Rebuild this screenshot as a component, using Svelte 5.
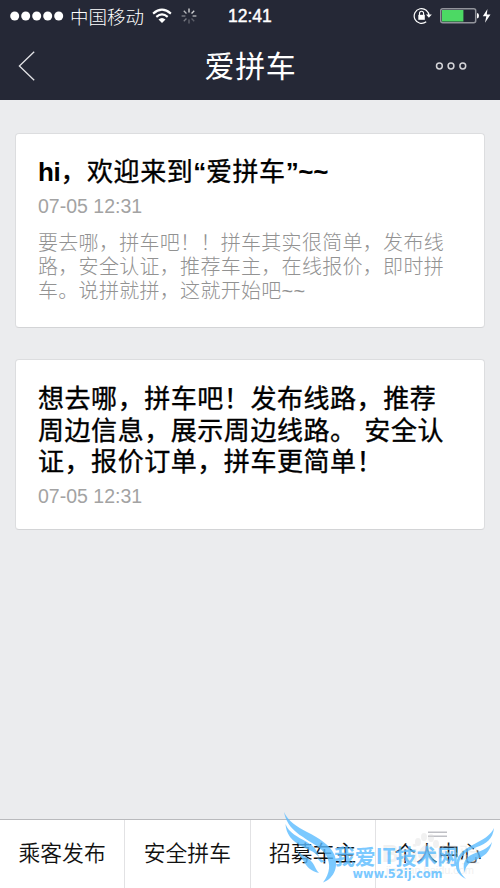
<script>
  const cards = [
    {
      title: ['hi，欢迎来到“爱拼车”~~'],
      date: '07-05 12:31',
      body: ['要去哪，拼车吧！！拼车其实很简单，发布线', '路，安全认证，推荐车主，在线报价，即时拼', '车。说拼就拼，这就开始吧~~']
    },
    {
      title: ['想去哪，拼车吧！发布线路，推荐', '周边信息，展示周边线路。 安全认', '证，报价订单，拼车更简单！'],
      date: '07-05 12:31',
      body: []
    }
  ];
  const tabs = ['乘客发布', '安全拼车', '招募车主', '个人中心'];
  const spokes = [1, 0.95, 0.8, 0.3, 0.35, 0.45, 0.5, 0.8];

  // Odd pieces are Latin letters, quotes and tildes, set in the bold Latin face.
  const pieces = (line) => line.split(/([a-z“”~]+)/);
</script>

<div class="screen">
  <header>
    <div class="status">
      <svg class="signal" width="54" height="10" viewBox="0 0 54 10">
        {#each [0, 1, 2, 3, 4] as i}
          <circle cx={4.7 + i * 11} cy="5" r="4.5" fill="#fff" />
        {/each}
      </svg>
      <span class="carrier">中国移动</span>
      <svg class="wifi" width="20" height="16" viewBox="0 0 20 16" fill="none" stroke="#fff" stroke-width="2.1">
        <path d="M1.1 5.6Q10 -2.2 18.9 5.6" />
        <path d="M4.3 8.9Q10 3.8 15.7 8.9" />
        <path d="M6.5 11.6Q10 8.2 13.5 11.6L10 15Z" fill="#fff" stroke="none" />
      </svg>
      <svg class="spinner" width="16" height="16" viewBox="-8 -8 16 16" stroke="#fff" stroke-width="1.3">
        {#each spokes as o, i}
          <path d="M0 -3.6V-7.4" opacity={o * 0.85} transform="rotate({i * 45})" />
        {/each}
      </svg>
      <span class="time">12:41</span>
      <svg class="lock" width="20" height="18" viewBox="0 0 20 18" fill="none" stroke="#fff">
        <path d="M16 9A7.4 7.4 0 1 0 13.2 14.8" stroke-width="1.2" />
        <path d="M13 7.6H18.8L15.9 10.7Z" fill="#fff" stroke="none" />
        <rect x="5.3" y="7.8" width="6.5" height="5" fill="#fff" stroke="none" />
        <path d="M6.5 8V6.5A2.05 2.3 0 0 1 10.6 6.5V8" stroke-width="1.1" />
      </svg>
      <svg class="battery" width="52" height="18" viewBox="0 0 52 18">
        <rect x=".7" y="1.7" width="35" height="14" rx="2" fill="none" stroke="#92949b" stroke-width="1.5" />
        <rect x="2" y="3" width="21.4" height="11.5" fill="#4cd964" />
        <path d="M37 6Q39 6.2 39 8.8Q39 11.2 37 11.6Z" fill="#fff" />
        <path d="M47.5 2L42.8 9.2H46.3L45 15.7L50.5 7.5H46.8Z" fill="#fff" />
      </svg>
    </div>
    <div class="bar">
      <svg class="back" width="18" height="32" viewBox="0 0 18 32" fill="none" stroke="#e3e3e6" stroke-width="1.3">
        <path d="M16.2 1.8L1.4 16L16.2 30.3" />
      </svg>
      <h1>爱拼车</h1>
      <svg class="more" width="32" height="10" viewBox="0 0 32 10" fill="none" stroke="#d4d4d8" stroke-width="1.5">
        <circle cx="4.4" cy="5" r="2.9" /><circle cx="16" cy="5" r="2.9" /><circle cx="27.8" cy="5" r="2.9" />
      </svg>
    </div>
  </header>

  <main>
    {#each cards as card}
      <article>
        <h2>{#each card.title as line}<span>{#each pieces(line) as piece, i}{#if i % 2}<b>{piece}</b>{:else}{piece}{/if}{/each}</span>{/each}</h2>
        <time>{card.date}</time>
        {#if card.body.length}
          <p>{#each card.body as line}<span>{line}</span>{/each}</p>
        {/if}
      </article>
    {/each}
  </main>

  <nav>
    {#each tabs as tab}
      <button>{tab}</button>
    {/each}
  </nav>

  <svg class="mark" width="230" height="88" viewBox="270 800 230 88">
    <g stroke="#bfc0c5" stroke-width="1.4"><path d="M428 832.3H447M428 836.3H447" /></g>
    <g fill="#ddd" opacity=".4">
      <ellipse cx="418" cy="842" rx="3" ry="4" /><ellipse cx="424" cy="837" rx="3" ry="4" />
      <ellipse cx="431" cy="838" rx="3" ry="4" /><ellipse cx="436" cy="844" rx="3" ry="4" />
      <path d="M427 844C421 846 416 854 419 858Q427 861 436 858C439 853 433 846 427 844Z" />
      <text x="382" y="862" font-size="23" font-weight="700">Bai</text>
      <text x="438" y="862" font-size="21">经验</text>
      <text x="386" y="874" font-size="11" textLength="88">jingyan.baidu.com</text>
    </g>
    <g fill="#5bbcff" opacity=".8">
      <path d="M284 812C288 821 297 827 307 832C319 838 330 845 334 854C339 865 335 878 323 882.5C330 873 331 864 326 855C321 847 311 843 303 837C293 831 286 823 284 812Z" />
      <path d="M285.5 824C289 833 298 837 306 841.5C314 846 317 850 319 857C313 850 308 850 301 846C292 841 286 834 285.5 824Z" />
      <path d="M296 849C300 856 307 856 311 861C315 865 315 869 319 873C311 871 307 867 304 862C302 857 298 855 296 849Z" />
      <path d="M317 858C321 859 324 860 325 862L321 862.5Z" />
      <path d="M494 828C493 839 486 844 477 847C465 851 458 858 459 866C459 871 462 875 466 879C457 875 454 867 457 860C460 850 470 847 478 842C486 838 491 834 494 828Z" />
      <path d="M492 842C490 852 484 857 475 860C468 863 465 867 465 873C462 865 464 859 471 855C480 851 488 849 492 842Z" />
      <text class="brand" x="334" y="863.5" textLength="124" lengthAdjust="spacingAndGlyphs">我爱IT技术网</text>
      <text class="site" x="352.5" y="878" textLength="90" lengthAdjust="spacingAndGlyphs">www.52ij.com</text>
    </g>
  </svg>
</div>

<style>
  :global(body) { margin: 0; }
  .screen {
    position: relative;
    display: flex;
    flex-direction: column;
    width: 500px;
    height: 888px;
    overflow: hidden;
    background: #ebecee;
    font-family: "Liberation Sans", "Noto Sans CJK SC", sans-serif;
  }
  svg { display: block; flex: none; }
  header { height: 100px; background: #252836; color: #fff; flex: none; }
  .status { display: flex; align-items: center; height: 32px; padding-left: 9.5px; }
  .carrier { width: 74px; margin-left: 6.5px; font: 300 18.5px/32px "Noto Sans CJK SC", sans-serif; white-space: nowrap; }
  .wifi { margin-left: 8px; }
  .spinner { margin-left: 9px; }
  .time { width: 46px; margin-left: 31px; font-size: 17.5px; -webkit-text-stroke: .45px #fff; }
  .lock { margin-left: 139px; }
  .battery { margin-left: 7px; }
  .bar { display: flex; align-items: center; justify-content: space-between; height: 68px; padding: 0 33px 0 18px; }
  .back { margin-right: 30px; }
  h1 { margin: 0; font: 400 30px/64px "Noto Sans CJK SC", sans-serif; letter-spacing: .7px; height: 68px; }
  main { display: flex; flex-direction: column; gap: 31px; padding: 33px 15px 0; flex: 1; }
  article {
    box-sizing: border-box;
    height: 195px;
    padding: 23px 22px 0;
    border: 1px solid #dcdddf;
    border-bottom-color: #d3d4d6;
    border-radius: 4px;
    background: #fff;
  }
  article:last-child { height: 171px; padding-top: 24px; }
  h2 { margin: 0; color: #000; font: 400 26px/31.7px "Liberation Sans", "Noto Sans CJK SC", sans-serif; letter-spacing: .55px; -webkit-text-stroke: .35px #000; }
  h2 b { font-weight: 700; -webkit-text-stroke: 0; letter-spacing: -.3px; }
  h2 span, p span { display: block; white-space: nowrap; }
  time { display: block; margin-top: 5px; color: #a3a3a3; font-size: 19.5px; line-height: 24px; }
  p { margin: 13px 0 0; color: #929292; font: 300 20px/24.3px "Liberation Sans", "Noto Sans CJK SC", sans-serif; letter-spacing: .3px; }
  nav { display: flex; height: 68px; border-top: 1px solid #b9babd; background: #fff; flex: none; }
  button {
    flex: 1;
    padding: 0 0 4px;
    border: 0;
    border-left: 1px solid #e2e2e4;
    background: none;
    color: #111;
    font: 350 21.8px/62px "Noto Sans CJK SC", sans-serif;
    white-space: nowrap;
  }
  button:first-child { border-left: 0; }
  .mark { position: absolute; right: 0; bottom: 0; pointer-events: none; font-family: "Liberation Sans", "Noto Sans CJK SC", sans-serif; }
  .brand { font: 700 21px "Noto Sans CJK SC", sans-serif; }
  .site { font: 700 12px "DejaVu Sans", sans-serif; }
</style>
